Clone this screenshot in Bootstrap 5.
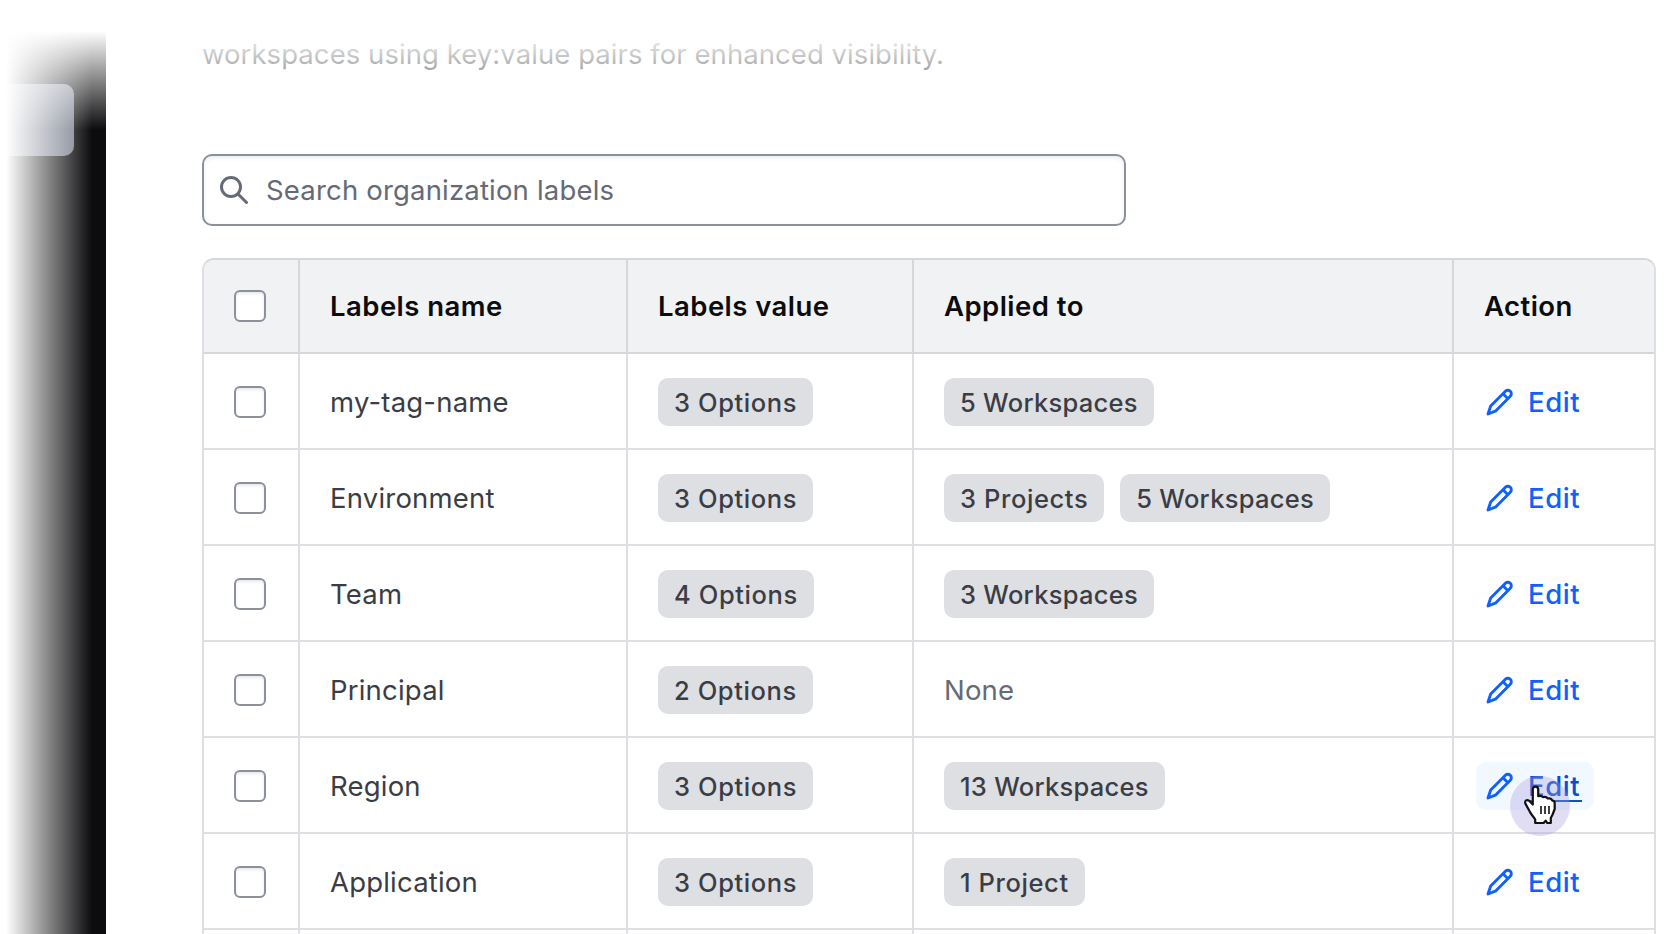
<!DOCTYPE html>
<html lang="en">
<head>
<meta charset="utf-8">
<title>Organization labels</title>
<link href="https://cdn.jsdelivr.net/npm/bootstrap@5.3.0/dist/css/bootstrap.min.css" rel="stylesheet">
<style>
body{font-family:Inter,"Liberation Sans",sans-serif;font-size:27.5px;line-height:36px;color:#3b3d45;background:#fff}
.page{height:934px}
.side{width:106px;background:#0c0c0e;padding-top:84px}
.side::after{content:"";position:absolute;inset:0;background:linear-gradient(90deg,#fff 6px,rgba(255,255,255,0) 92px)}
.side-item{width:74px;height:72px;background:#7b8190;border-radius:0 10px 10px 0}
.topfade{position:absolute;inset:0 0 auto 0;height:130px;background:linear-gradient(#fff 31px,rgba(255,255,255,0) 130px);pointer-events:none}
.content{padding:36px 0 0 96px}
.intro{height:118px;color:#1c1d22;letter-spacing:.06px;white-space:nowrap}
.search{width:924px;height:72px;border:2px solid #8c909c;border-radius:10px;padding:0 16px;gap:18px;box-shadow:inset 0 2px 4px rgba(101,106,118,.12);color:#656a76;letter-spacing:.18px}
.labels{width:1454px;margin-top:32px;table-layout:fixed;border-collapse:separate;border-spacing:0;border:2px solid #dedfe3;border-top-color:#d5d7db;border-radius:12px 12px 0 0;border-bottom:0}
.labels th,.labels td{border:0 solid #dedfe3;border-width:0 2px 2px 0;padding:2px 0 0 30px;height:96px;vertical-align:middle;line-height:36px;white-space:nowrap;letter-spacing:.2px}
.labels th{height:94px;padding-top:0;background:#f1f2f4;border-color:#d5d7db;color:#0c0c0e;font-weight:600;letter-spacing:.46px}
.labels tr>:last-child{border-right:0}
.labels th:first-child{border-top-left-radius:10px}
.labels th:last-child{border-top-right-radius:10px}
.box{display:block;width:32px;height:32px;border:2px solid #8c909c;border-radius:6px;background:#fff;box-shadow:inset 0 2px 3px rgba(101,106,118,.14)}
.chip{display:block;height:48px;line-height:49px;padding:0 16px;border-radius:10px;background:#dedfe3;font-size:25.5px;font-weight:500;letter-spacing:.6px}
.chip.long{letter-spacing:.28px}
.edit{display:inline-flex;align-items:center;position:relative;height:48px;width:118px;margin-left:-8px;padding-left:10px;border-radius:10px;color:#1060ff;text-decoration:none;font-weight:500;letter-spacing:.6px}
.edit svg.pen{margin-right:14px}
.edit.hot{background:#f2f8ff;color:#0c4ed1}
.edit.hot .pen{color:#1060ff}
.edit.hot span{background:linear-gradient(#0c4ed1,#0c4ed1) 0 32px/100% 2px no-repeat;padding-right:2px}
.pointer{position:absolute;left:34px;top:14px}
</style>
</head>
<body>
<div class="page d-flex position-relative overflow-hidden">
<aside class="side position-relative flex-shrink-0"><div class="side-item"></div></aside>
<main class="content flex-shrink-0">
<div class="intro">workspaces using key:value pairs for enhanced visibility.</div>
<div class="search d-flex align-items-center">
<svg width="28" height="28" viewBox="0 0 28 28" fill="none" stroke="currentColor" stroke-width="3" stroke-linecap="round"><circle cx="11" cy="11" r="9.5"/><path d="M18 18l8.5 8.5"/></svg>
<span>Search organization labels</span></div>
<table class="labels">
<colgroup><col style="width:96px"><col style="width:328px"><col style="width:286px"><col style="width:540px"><col style="width:200px"></colgroup>
<thead><tr><th><i class="box"></i></th><th>Labels name</th><th>Labels value</th><th>Applied to</th><th>Action</th></tr></thead>
<tbody id="rows"></tbody>
</table>
</main>
<div class="topfade"></div>
</div>
<script src="https://cdn.jsdelivr.net/npm/bootstrap@5.3.0/dist/js/bootstrap.bundle.min.js"></script>
<script>
const data=[["my-tag-name","3 Options",["5 Workspaces"]],["Environment","3 Options",["3 Projects","5 Workspaces"]],["Team","4 Options",["3 Workspaces"]],["Principal","2 Options",[]],["Region","3 Options",["13 Workspaces"]],["Application","3 Options",["1 Project"]]];
const pen='<svg class="pen" width="28" height="28" viewBox="0 0 28 28" fill="none" stroke="currentColor" stroke-width="2.9" stroke-linejoin="round"><path d="M2 26L4.700 18 19.400 3.300a3.450 3.450 0 0 1 4.900 4.900L9.400 23.200zM17 5.800l5 5"/></svg>';
const hand='<svg class="pointer" width="60" height="60" viewBox="0 0 60 60"><circle cx="30" cy="30" r="30" fill="#a89fe0" fill-opacity=".34"/><path d="M22.800 28.500V13.300a2.700 2.700 0 0 1 5.400 0V20.200c2-.7 4 0 4.700 1 2-.5 4 .1 4.900 1.300 2.400-.4 3.800.5 4.200 1.800 1.700.2 2.700 1.200 2.700 2.700V33L42.600 38.500 40.800 42V47H37.200L35.700 44.600 33.600 47H25.200V43.500C24 41 21 38.500 20 36L15.400 27.600c-1-3 1.500-4.600 4-2.600z" fill="#fff" stroke="#111" stroke-width="2.200" stroke-linejoin="round"/><path d="M31 30v8M35 30v8M39 30v8" stroke="#111" stroke-width="1.600"/></svg>';
const chip=t=>'<span class="chip'+(t.endsWith('Workspaces')?' long':'')+'">'+t+'</span>';
document.getElementById('rows').innerHTML=[...data,["","",[]]].map((r,i)=>i>5?'<tr><td></td><td></td><td></td><td></td><td></td></tr>':`<tr><td><i class="box"></i></td><td>${r[0]}</td><td><div class="d-flex">${chip(r[1])}</div></td><td>${r[2].length?'<div class="d-flex gap-3">'+r[2].map(chip).join('')+'</div>':'<span style="color:#656a76">None</span>'}</td><td><a class="edit${i==4?' hot':''}">${pen}<span>Edit</span>${i==4?hand:''}</a></td></tr>`).join('');
</script>
</body>
</html>
